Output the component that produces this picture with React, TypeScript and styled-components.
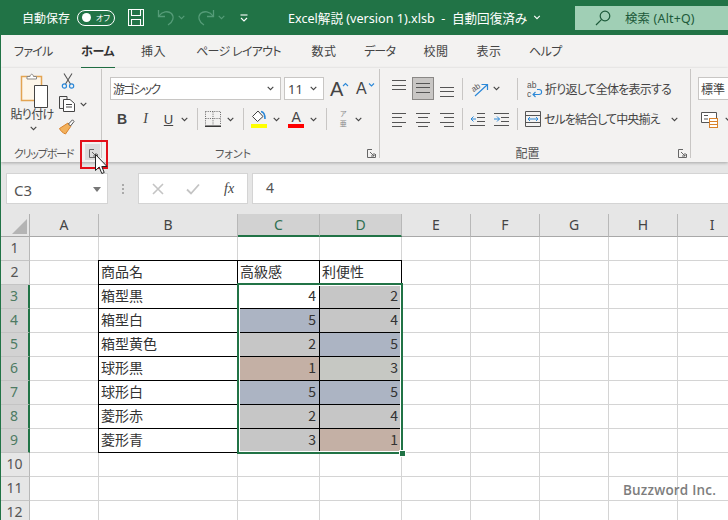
import React from 'react';
import styled, { createGlobalStyle } from 'styled-components';

const Global = createGlobalStyle`
  html, body { margin: 0; padding: 0; background: #fff; }
  * { box-sizing: border-box; }
`;
const UI = `"Noto Sans", "Noto Sans CJK JP", sans-serif`;
const GREEN = '#217346';

const Win = styled.div`
  position: relative; width: 728px; height: 520px; overflow: hidden;
  border-left: 1px solid ${GREEN}; background: #fff;
  font-family: ${UI}; font-feature-settings: "palt"; color: #444;
`;
const TitleBar = styled.div`
  height: 35px; background: ${GREEN}; color: #fff; display: flex; align-items: center;
  padding-left: 21px; font-size: 12px; white-space: nowrap;
`;
const Slot = styled.span<{ $ml?: number; $w?: number }>`
  display: inline-flex; align-items: center; justify-content: center; flex: none;
  margin-left: ${p => p.$ml ?? 0}px;
  ${p => (p.$w ? `width: ${p.$w}px;` : '')}
`;
const Toggle = styled.span`
  display: flex; align-items: center; justify-content: space-between; flex: none;
  width: 38px; height: 16px; margin-left: 7px; padding: 0 4px 0 4px;
  border: 1px solid #fff; border-radius: 8px; font-size: 8px;
  &::before { content: ""; width: 9px; height: 9px; border-radius: 50%; background: #fff; }
`;
const TitleText = styled.span`
  margin-left: 40px; font-size: 12.6px; width: 241px; flex: none;
`;
const SearchBox = styled.div`
  position: absolute; left: 574px; top: 6px; width: 160px; height: 24px;
  background: #a0cfb5; color: #1d5a3a; display: flex; align-items: center;
  padding-left: 20px; font-size: 12.4px;
`;
const SearchLabel = styled.span`margin-left: 14px; letter-spacing: .2px;`;

const TabBar = styled.div`
  height: 33px; background: #f3f2f1; display: flex; align-items: center;
  padding: 0 0 2px 13px; font-size: 12px; color: #444;
`;
const Tab = styled.span<{ $ml?: number; $w: number; $ls?: number; $active?: boolean }>`
  position: relative; flex: none; text-align: center; white-space: nowrap;
  width: ${p => p.$w}px; margin-left: ${p => p.$ml ?? 0}px;
  letter-spacing: ${p => p.$ls ?? 0}px;
  font-weight: ${p => (p.$active ? 700 : 400)};
  color: ${p => (p.$active ? '#333' : '#444')};
  ${p => p.$active ? `&::after { content: ""; position: absolute; left: 0; right: -1px; top: 25px; height: 2px; background: ${GREEN}; }` : ''}
`;
const Ribbon = styled.div`
  position: relative; z-index: 2; height: 94px; background: #f3f2f1; display: flex; align-items: flex-start;
  padding-top: 1px; box-shadow: 0 1px 3px rgba(0,0,0,.28);
`;
const Group = styled.div<{ $w: number; $last?: boolean }>`
  flex: none; width: ${p => p.$w}px; height: 89px; padding-top: 4px;
  display: flex; flex-direction: column;
  ${p => (p.$last ? '' : 'border-right: 1px solid #c8c6c4;')}
`;
const GroupBody = styled.div`height: 75px; display: flex;`;
const GroupFoot = styled.div`height: 10px; display: flex; align-items: center; padding-right: 3px;`;
const FootLabel = styled.span<{ $ls?: number; $size?: number }>`
  flex: 1; text-align: center; font-size: ${p => p.$size ?? 11}px; color: #555; white-space: nowrap;
  letter-spacing: ${p => p.$ls ?? 0}px;
`;
const Launcher = styled.span<{ $hot?: boolean }>`
  position: relative; width: 12px; height: 10px; display: flex; justify-content: flex-end; align-items: center;
  ${p => p.$hot ? `
    &::before { content: ""; position: absolute; right: -2px; top: -4px; width: 15px; height: 16px; background: #dcdcdc; }
    & > svg { position: relative; }
  ` : ''}
`;
const PasteCol = styled.div`
  width: 48px; margin-left: 7px; display: flex; flex-direction: column; align-items: center;
  font-size: 12px; line-height: 14px; color: #444; white-space: nowrap; letter-spacing: -.7px;
`;
const PasteIcon = styled.span`display: flex; height: 36px; margin-left: 4px; margin-bottom: -1px;`;
const PasteCaret = styled.span`display: flex; margin-top: 4px; margin-left: 2px;`;
const ClipTools = styled.div`display: flex; flex-direction: column; gap: 7px; margin-left: 2px; padding-left: 1px;`;
const ClipRow = styled.div`display: flex; align-items: center; height: 16px;`;
const Stack = styled.div<{ $pl: number }>`
  flex: 1; padding: 4px 0 0 ${p => p.$pl}px; display: flex; flex-direction: column; gap: 8px;
`;
const Row = styled.div<{ $h: number }>`height: ${p => p.$h}px; display: flex; align-items: center; white-space: nowrap;`;
const Combo = styled.div<{ $w: number; $ml?: number }>`
  flex: none; width: ${p => p.$w}px; height: 23px; margin-left: ${p => p.$ml ?? 0}px;
  background: #fff; border: 1px solid #c8c6c4; display: flex; align-items: center; justify-content: space-between;
  padding: 0 6px 0 2px; font-size: 12px; color: #444;
`;
const FontName = styled.span`letter-spacing: -1.6px;`;
const ComboSize = styled(Combo)`padding-left: 3px; font-size: 13px;`;
const GrowA = styled.span<{ $size: number; $ml: number }>`
  position: relative; font-size: ${p => p.$size}px; line-height: 20px; margin-left: ${p => p.$ml}px;
  font-family: "Liberation Sans", sans-serif; color: #444; flex: none; width: 17px;
`;
const Caret = styled.svg`position: absolute; top: 3px; right: -2px;`;
const Bold = styled.span`font: 700 14px "Liberation Sans", sans-serif; color: #444;`;
const Ital = styled.span`font: italic 400 14px "Liberation Serif", serif; color: #444;`;
const Under = styled.span`font: 400 13px "Liberation Sans", sans-serif; color: #444; text-decoration: underline;`;
const VSep = styled.span<{ $ml?: number }>`
  flex: none; width: 1px; height: 22px; margin-left: ${p => p.$ml ?? 0}px; background: #c8c6c4;
`;
const ColorA = styled.span`
  flex: none; width: 16px; height: 18px; display: flex; flex-direction: column; align-items: center;
  font: 400 14px/14px "Liberation Sans", sans-serif; color: #444;
  &::after { content: ""; width: 16px; height: 4px; background: #f00; margin-top: 0; }
`;
const Phonetic = styled.span`
  display: flex; flex-direction: column; align-items: center; font-size: 7px; line-height: 10px; color: #888; flex: none; width: 12px;
`;
const ActiveBox = styled.span<{ $ml: number }>`
  flex: none; display: flex; align-items: center; justify-content: center; width: 22px; height: 23px;
  margin-left: ${p => p.$ml}px; background: #c8c6c4; border: 1px solid #8a8886;
`;
const RibbonText = styled.span<{ $ml: number; $ls: number }>`
  margin-left: ${p => p.$ml}px; font-size: 12px; color: #444; flex: none; letter-spacing: ${p => p.$ls}px;
`;

const FormulaBar = styled.div`
  height: 52px; background: #e6e6e6; display: flex; align-items: flex-start; padding: 11px 0 0 5px; color: #666;
`;
const NameBox = styled.div`
  flex: none; width: 102px; height: 31px; background: #fff; border: 1px solid #d4d4d4;
  display: flex; align-items: center; justify-content: space-between; padding: 2px 6px 0 7px;
  font-size: 15px; color: #555;
`;
const Dots = styled.div`
  flex: none; width: 30px; height: 31px; display: flex; align-items: center; justify-content: center;
`;
const FxBox = styled.div`
  flex: none; width: 110px; height: 31px; background: #fff; border: 1px solid #d4d4d4;
  display: flex; align-items: center; padding-left: 13px; gap: 17px; 
`;
const FxText = styled.span`
  font: italic 400 14px "Liberation Serif", serif; color: #444; margin-left: 7px;
`;
const FormulaInput = styled.div`
  flex: 1; height: 31px; margin-left: 4px; background: #fff; border: 1px solid #d4d4d4; border-right: 0;
  display: flex; align-items: center; padding: 0 0 2px 13px; font-size: 14px; color: #555;
`;

const COLS = [29, 69, 139, 82, 82, 69, 69, 69, 69, 69];
const Sheet = styled.div`
  position: relative; display: grid;
  grid-template-columns: ${COLS.map(c => c + 'px').join(' ')};
  grid-template-rows: 23px repeat(12, 24px);
  font-family: "Noto Sans CJK JP", sans-serif; font-feature-settings: normal;
`;
const Corner = styled.div`
  background: #e6e6e6; border-right: 1px solid #b0b0b0; border-bottom: 1px solid #a8a8a8;
  display: flex; align-items: flex-end; justify-content: flex-end; padding: 0 2px 2px 0;
`;
const ColHead = styled.div<{ $sel?: boolean }>`
  display: flex; align-items: center; justify-content: center; padding-bottom: 1px;
  font: 400 14px "Noto Sans", sans-serif;
  background: ${p => (p.$sel ? '#d2d2d2' : '#e6e6e6')};
  color: ${p => (p.$sel ? '#2f6f50' : '#444')};
  border-right: 1px solid #b8b8b8;
  border-bottom: ${p => (p.$sel ? `2px solid ${GREEN}` : '1px solid #a8a8a8')};
`;
const RowHead = styled.div<{ $sel?: boolean }>`
  display: flex; align-items: center; justify-content: center; padding: 0 1px 2px 0;
  font: 400 14px "Noto Sans", sans-serif;
  background: ${p => (p.$sel ? '#d2d2d2' : '#e6e6e6')};
  color: ${p => (p.$sel ? '#4d7a62' : '#555')};
  border-bottom: 1px solid #c4c4c4;
  border-right: ${p => (p.$sel ? `2px solid ${GREEN}` : '1px solid #b8b8b8')};
`;
const Cell = styled.div<{ $fill?: string; $box?: boolean; $num?: boolean }>`
  display: flex; align-items: center; font-size: 14px; color: #333; white-space: nowrap;
  justify-content: ${p => (p.$num ? 'flex-end' : 'flex-start')};
  padding: 0 ${p => (p.$num ? 3 : 0)}px 3px ${p => (p.$num ? 0 : 2)}px;
  background: ${p => p.$fill ?? '#fff'};
  border-right: 1px solid ${p => (p.$box ? '#000' : '#d4d4d4')};
  border-bottom: 1px solid ${p => (p.$box ? '#000' : '#d4d4d4')};
  ${p => (p.$box ? 'box-shadow: -1px 0 0 #000, 0 -1px 0 #000, -1px -1px 0 #000;' : '')}
`;
const Selection = styled.div`
  position: absolute; left: 236px; top: 69px; width: 166px; height: 171px;
  border: 2px solid ${GREEN}; box-shadow: inset 0 0 0 1px #fff; pointer-events: none;
`;
const Handle = styled.div`
  position: absolute; right: -5px; bottom: -5px; background: ${GREEN}; border: 1px solid #fff; 
  box-sizing: content-box; width: 5px; height: 5px;
`;
const Watermark = styled.div`
  position: absolute; left: 622px; top: 481px; font: 600 13.5px "Open Sans", sans-serif; color: #7d7d7d; z-index: 3; letter-spacing: .2px;
`;
const RedBox = styled.div`
  position: absolute; left: 79px; top: 140px; width: 28px; height: 29px; border: 2.5px solid #e3101a; z-index: 4;
`;
const Cursor = styled.svg`position: absolute; left: 94px; top: 154px; z-index: 5;`;

/* ---------- icons ---------- */
const Chev = ({ c = '#444', w = 7 }: { c?: string; w?: number }) => (
  <svg width={w} height="5" viewBox="0 0 7 5" fill="none"><path d="M.7 .8 3.5 3.6 6.3 .8" stroke={c} strokeWidth="1.1" /></svg>
);
const LaunchIcon = () => (
  <svg width="9" height="9" viewBox="0 0 9 9" fill="none" stroke="#666" strokeWidth="1">
    <path d="M5 .5H.5V8.5H8.5V5" /><path d="M3 3 7 7M7 4V7H4" />
  </svg>
);
const Save = () => (
  <svg width="16" height="17" viewBox="0 0 16 17" fill="none" stroke="#fff" strokeWidth="1.1">
    <path d="M.5 .5H15.5V16.5H.5Z" /><path d="M3.5 .5V6.5H12.5V.5M3.5 16.5V10.5H12.5V16.5" />
  </svg>
);
const Undo = ({ flip }: { flip?: boolean }) => (
  <svg width="18" height="17" viewBox="0 0 18 17" fill="none" stroke="#559c78" strokeWidth="1.3" style={flip ? { transform: 'scaleX(-1)' } : undefined}>
    <path d="M1.5 1V7.5H8" /><path d="M2 7C5 2.5 11 1.5 14.5 4.5C17.5 8 16 13 11 16" />
  </svg>
);
const QuickMenu = () => (
  <svg width="8" height="8" viewBox="0 0 8 8" fill="none" stroke="#fff" strokeWidth="1.1">
    <path d="M.5 1H7.5" /><path d="M1 4 4 7 7 4" />
  </svg>
);
const Magnifier = () => (
  <svg width="16" height="16" viewBox="0 0 16 16" fill="none" stroke="#1d5a3a" strokeWidth="1.2">
    <circle cx="10" cy="6" r="4.8" /><path d="M6.4 9.6 1 15" />
  </svg>
);
const Paste = () => (
  <svg width="28" height="36" viewBox="0 0 28 36" fill="none">
    <path d="M1.5 3.5H21.5V27.5H1.5Z" fill="#fdf6ea" stroke="#e3a452" strokeWidth="1.5" />
    <path d="M7 6V3.5H10C10.5 .5 13 .5 13.5 3.5H16.5V6Z" fill="#fff" stroke="#8a8886" />
    <path d="M14.5 12.5H27.5V34.5H14.5Z" fill="#fff" stroke="#444" />
  </svg>
);
const Scissors = () => (
  <svg width="14" height="16" viewBox="0 0 14 16" fill="none">
    <path d="M3 .5 9.5 11M11 .5 4.5 11" stroke="#555" strokeWidth="1.1" />
    <circle cx="3.4" cy="13" r="2.1" stroke="#2b88d8" strokeWidth="1.2" />
    <circle cx="10.6" cy="13" r="2.1" stroke="#2b88d8" strokeWidth="1.2" />
  </svg>
);
const Copy = () => (
  <svg width="16" height="16" viewBox="0 0 16 16" fill="none" stroke="#444" strokeWidth="1">
    <path d="M4 12.5H.5V.5H8V3" /><path d="M4.5 3.5H11L15.5 7.5V15.5H4.5Z" fill="#fff" /><path d="M7 8.5H13M7 11H13" />
  </svg>
);
const Brush = () => (
  <svg width="16" height="16" viewBox="0 0 16 16" fill="none">
    <path d="M9 4 12 7 6.5 15C4 14 1.5 12 .5 9.5Z" fill="#f2b15c" stroke="#d9822b" />
    <path d="M9.5 5 13.5 .8 15 2.5 11.5 7Z" fill="#fff" stroke="#555" />
  </svg>
);
const Borders = () => (
  <svg width="16" height="16" viewBox="0 0 16 16" fill="none">
    <path d="M.5 .5H15.5V14M.5 .5V14M8 .5V14M.5 7.5H15.5" stroke="#666" strokeDasharray="1 1.2" />
    <path d="M0 15.2H16" stroke="#222" strokeWidth="1.4" />
  </svg>
);
const Fill = () => (
  <svg width="16" height="18" viewBox="0 0 16 18" fill="none">
    <path d="M7 1 12 6.5 6.5 11.5 1.5 6.5Z" stroke="#444" fill="#fff" />
    <path d="M10 1.5C13 2 14 5 14 9" stroke="#2b88d8" strokeWidth="1.6" />
    <rect y="14" width="16" height="4" fill="#ff0" />
  </svg>
);
const Lines = ({ w, h, rows }: { w: number; h: number; rows: [number, number, number][] }) => (
  <svg width={w} height={h} viewBox={`0 0 ${w} ${h}`} fill="none" stroke="#555" strokeWidth="1">
    {rows.map(([a, b, y]) => <path key={y} d={`M${a} ${y + .5}H${b}`} />)}
  </svg>
);
const Orient = () => (
  <svg width="20" height="20" viewBox="0 0 20 20" fill="none">
    <text x="1" y="11" fontSize="8" fill="#555" fontFamily="Liberation Sans" transform="rotate(-35 6 8)">ab</text>
    <path d="M5 17 17 6M11.5 5.5H17.5V11" stroke="#2b88d8" strokeWidth="1.2" />
  </svg>
);
const Indent = ({ out }: { out?: boolean }) => (
  <svg width="15" height="14" viewBox="0 0 15 14" fill="none" strokeWidth="1">
    <path d={out ? 'M7 1.5H15M7 5.5H15M7 9.5H15M0 13.5H15' : 'M0 1.5H15M7 5.5H15M7 9.5H15M0 13.5H15'} stroke="#555" />
    <path d={out ? 'M6 7H1M3.5 4.5 1 7 3.5 9.5' : 'M0 7H5.5M3 4.5 5.5 7 3 9.5'} stroke="#2b88d8" />
  </svg>
);
const Wrap = () => (
  <svg width="16" height="18" viewBox="0 0 16 18" fill="none">
    <text x="0" y="8" fontSize="8.5" fill="#555" fontFamily="Liberation Sans">ab</text>
    <text x="0" y="17" fontSize="8.5" fill="#555" fontFamily="Liberation Sans">c</text>
    <path d="M6 14.5H12C15.5 14.5 15.5 9.5 12 9.5H10M8.5 12 6 14.5 8.5 17" stroke="#2b88d8" strokeWidth="1.1" />
  </svg>
);
const Merge = () => (
  <svg width="16" height="16" viewBox="0 0 16 16" fill="none">
    <path d="M.5 .5H15.5V15.5H.5ZM.5 4.5H15.5M.5 11.5H15.5" stroke="#555" />
    <path d="M3 8H13M5 6 3 8 5 10M11 6 13 8 11 10" stroke="#2b88d8" />
  </svg>
);
const CondFmt = () => (
  <svg width="17" height="17" viewBox="0 0 17 17" fill="none">
    <path d="M.5 1.5H15.5V11.5H.5Z" stroke="#555" fill="#fff" />
    <path d="M3 4.5H7M3 8H7" stroke="#555" />
    <rect x="8.5" y="7.5" width="8" height="9" fill="#fff" stroke="#d9822b" />
    <path d="M8.5 10.5H16.5M8.5 13.5H16.5" stroke="#d9822b" />
  </svg>
);

const A_TOP: [number, number, number][] = [[0, 14, 3], [0, 14, 8], [0, 14, 12]];
const A_MID: [number, number, number][] = [[0, 14, 5], [0, 14, 9], [0, 14, 14]];
const A_BOT: [number, number, number][] = [[0, 14, 10], [0, 14, 14], [0, 14, 19]];
const H_L: [number, number, number][] = [[0, 14, 5], [0, 10, 9], [0, 14, 14], [0, 10, 18]];
const H_C: [number, number, number][] = [[0, 14, 5], [2, 12, 9], [0, 14, 14], [2, 12, 18]];
const H_R: [number, number, number][] = [[0, 14, 5], [4, 14, 9], [0, 14, 14], [4, 14, 18]];

const TABS = [
  { t: 'ファイル', w: 38, ml: 0, ls: -.75 }, { t: 'ホーム', w: 33, ml: 29, active: true, ls: -.3 }, { t: '挿入', w: 25, ml: 27, ls: .5 },
  { t: 'ページ レイアウト', w: 85, ml: 30, ls: -.7 }, { t: '数式', w: 26, ml: 30, ls: .5 }, { t: 'データ', w: 31, ml: 27, ls: -.8 },
  { t: '校閲', w: 26, ml: 28, ls: .5 }, { t: '表示', w: 26, ml: 27, ls: .5 }, { t: 'ヘルプ', w: 32, ml: 27, ls: -.6 },
];

const A = '#acb4c3', G = '#c6c6c6', R = '#c4b0a5', L = '#c6c8c3';
const DATA: Record<number, [string, [string, string], [string, string]]> = {
  3: ['箱型黒', ['4', '#fff'], ['2', G]],
  4: ['箱型白', ['5', A], ['4', G]],
  5: ['箱型黄色', ['2', G], ['5', A]],
  6: ['球形黒', ['1', R], ['3', L]],
  7: ['球形白', ['5', A], ['5', A]],
  8: ['菱形赤', ['2', G], ['4', G]],
  9: ['菱形青', ['3', G], ['1', R]],
};
const LETTERS = ['A', 'B', 'C', 'D', 'E', 'F', 'G', 'H', 'I'];

const SheetRow = ({ r }: { r: number }) => {
  const sel = r >= 3 && r <= 9;
  const d = DATA[r];
  return (
    <>
      <RowHead $sel={sel}>{r}</RowHead>
      {LETTERS.map((l) => {
        if (r === 2 && l === 'B') return <Cell key={l} $box>商品名</Cell>;
        if (r === 2 && l === 'C') return <Cell key={l} $box>高級感</Cell>;
        if (r === 2 && l === 'D') return <Cell key={l} $box>利便性</Cell>;
        if (d && l === 'B') return <Cell key={l} $box>{d[0]}</Cell>;
        if (d && l === 'C') return <Cell key={l} $box $num $fill={d[1][1]}>{d[1][0]}</Cell>;
        if (d && l === 'D') return <Cell key={l} $box $num $fill={d[2][1]}>{d[2][0]}</Cell>;
        return <Cell key={l} />;
      })}
    </>
  );
};

export default function App() {
  return (
    <Win>
      <Global />
      <TitleBar>
        <span>自動保存</span>
        <Toggle>オフ</Toggle>
        <Slot $ml={13}><Save /></Slot>
        <Slot $ml={13}><Undo /></Slot>
        <Slot $ml={3}><Chev c="#559c78" /></Slot>
        <Slot $ml={12}><Undo flip /></Slot>
        <Slot $ml={3}><Chev c="#559c78" /></Slot>
        <Slot $ml={15}><QuickMenu /></Slot>
        <TitleText>Excel解説 (version 1).xlsb&nbsp; -&nbsp; 自動回復済み</TitleText>
        <Slot $ml={3}><Chev c="#fff" w={10} /></Slot>
        <SearchBox><Magnifier /><SearchLabel>検索 (Alt+Q)</SearchLabel></SearchBox>
      </TitleBar>
      <TabBar>
        {TABS.map(t => <Tab key={t.t} $w={t.w} $ml={t.ml} $ls={t.ls} $active={t.active}>{t.t}</Tab>)}
      </TabBar>
      <Ribbon>
        <Group $w={101}>
          <GroupBody>
            <PasteCol>
              <PasteIcon><Paste /></PasteIcon>
              <span>貼り付け</span>
              <PasteCaret><Chev /></PasteCaret>
            </PasteCol>
            <ClipTools>
              <ClipRow><Slot $ml={2}><Scissors /></Slot></ClipRow>
              <ClipRow><Copy /><Slot $ml={5}><Chev /></Slot></ClipRow>
              <ClipRow><Brush /></ClipRow>
            </ClipTools>
          </GroupBody>
          <GroupFoot><FootLabel $ls={-1.2}>クリップボード</FootLabel><Launcher $hot><LaunchIcon /></Launcher></GroupFoot>
        </Group>
        <Group $w={278}>
          <GroupBody>
            <Stack $pl={8}>
              <Row $h={23}>
                <Combo $w={171}><FontName>游ゴシック</FontName><Chev /></Combo>
                <ComboSize $w={40} $ml={3}>11<Chev /></ComboSize>
                <GrowA $size={20} $ml={6}>A<Caret width="7" height="5" viewBox="0 0 7 5" fill="none"><path d="M1 4 3.5 1.5 6 4" stroke="#2b88d8" strokeWidth="1.1" /></Caret></GrowA>
                <GrowA $size={16} $ml={9}>A<Caret width="7" height="5" viewBox="0 0 7 5" fill="none"><path d="M1 1.5 3.5 4 6 1.5" stroke="#2b88d8" strokeWidth="1.1" /></Caret></GrowA>
              </Row>
              <Row $h={22}>
                <Slot $ml={7}><Bold>B</Bold></Slot>
                <Slot $ml={16}><Ital>I</Ital></Slot>
                <Slot $ml={16}><Under>U</Under></Slot>
                <Slot $ml={8}><Chev /></Slot>
                <VSep $ml={9} />
                <Slot $ml={7}><Borders /></Slot>
                <Slot $ml={6}><Chev /></Slot>
                <VSep $ml={9} />
                <Slot $ml={7}><Fill /></Slot>
                <Slot $ml={6}><Chev /></Slot>
                <Slot $ml={8}><ColorA>A</ColorA></Slot>
                <Slot $ml={6}><Chev /></Slot>
                <VSep $ml={9} />
                <Slot $ml={10}><Phonetic><span>ア</span><span>亜</span></Phonetic></Slot>
                <Slot $ml={6}><Chev /></Slot>
              </Row>
            </Stack>
          </GroupBody>
          <GroupFoot><FootLabel>フォント</FootLabel><Launcher><LaunchIcon /></Launcher></GroupFoot>
        </Group>
        <Group $w={311}>
          <GroupBody>
            <Stack $pl={12}>
              <Row $h={23}>
                <Lines w={14} h={23} rows={A_TOP} />
                <ActiveBox $ml={6}><Lines w={14} h={21} rows={A_MID} /></ActiveBox>
                <Slot $ml={6}><Lines w={14} h={23} rows={A_BOT} /></Slot>
                <VSep $ml={8} />
                <Slot $ml={7}><Orient /></Slot>
                <Slot $ml={3}><Chev /></Slot>
                <VSep $ml={17} />
                <Slot $ml={9}><Wrap /></Slot>
                <RibbonText $ml={2} $ls={-.8}>折り返して全体を表示する</RibbonText>
              </Row>
              <Row $h={22}>
                <Lines w={14} h={22} rows={H_L} />
                <Slot $ml={10}><Lines w={14} h={22} rows={H_C} /></Slot>
                <Slot $ml={10}><Lines w={14} h={22} rows={H_R} /></Slot>
                <VSep $ml={8} />
                <Slot $ml={7}><Indent out /></Slot>
                <Slot $ml={9}><Indent /></Slot>
                <VSep $ml={8} />
                <Slot $ml={7}><Merge /></Slot>
                <RibbonText $ml={3} $ls={-.9}>セルを結合して中央揃え</RibbonText>
                <Slot $ml={11}><Chev /></Slot>
              </Row>
            </Stack>
          </GroupBody>
          <GroupFoot><FootLabel $size={12}>配置</FootLabel><Launcher><LaunchIcon /></Launcher></GroupFoot>
        </Group>
        <Group $w={40} $last>
          <GroupBody>
            <Stack $pl={7}>
              <Row $h={23}><Combo $w={60}>標準</Combo></Row>
              <Row $h={22}><Slot $ml={3}><CondFmt /></Slot><Slot $ml={7}><Chev /></Slot></Row>
            </Stack>
          </GroupBody>
        </Group>
      </Ribbon>
      <FormulaBar>
        <NameBox>C3
          <svg width="8" height="5" viewBox="0 0 8 5"><path d="M0 0H8L4 5Z" fill="#777" /></svg>
        </NameBox>
        <Dots>
          <svg width="2" height="10" viewBox="0 0 2 10" fill="#aaa"><rect width="2" height="2" /><rect y="4" width="2" height="2" /><rect y="8" width="2" height="2" /></svg>
        </Dots>
        <FxBox>
          <svg width="12" height="12" viewBox="0 0 12 12" fill="none" stroke="#c4c4c4" strokeWidth="1.6"><path d="M1 1 11 11M11 1 1 11" /></svg>
          <svg width="14" height="12" viewBox="0 0 14 12" fill="none" stroke="#c4c4c4" strokeWidth="1.8" style={{ marginLeft: 5 }}><path d="M1 6.5 5 10.5 13 1.5" /></svg>
          <FxText>fx</FxText>
        </FxBox>
        <FormulaInput>4</FormulaInput>
      </FormulaBar>
      <Sheet>
        <Corner><svg width="15" height="15" viewBox="0 0 15 15"><path d="M15 0V15H0Z" fill="#b4b4b4" /></svg></Corner>
        {LETTERS.map(l => <ColHead key={l} $sel={l === 'C' || l === 'D'}>{l}</ColHead>)}
        {Array.from({ length: 12 }, (_, i) => <SheetRow key={i} r={i + 1} />)}
        <Selection><Handle /></Selection>
      </Sheet>
      <RedBox />
      <Cursor width="13" height="22" viewBox="0 0 13 22">
        <path d="M.5 .5V16.5L4.2 13 6.8 19.5 9.2 18.5 6.8 12.5H12Z" fill="#fff" stroke="#222" strokeWidth="1" />
      </Cursor>
      <Watermark>Buzzword Inc.</Watermark>
    </Win>
  );
}
